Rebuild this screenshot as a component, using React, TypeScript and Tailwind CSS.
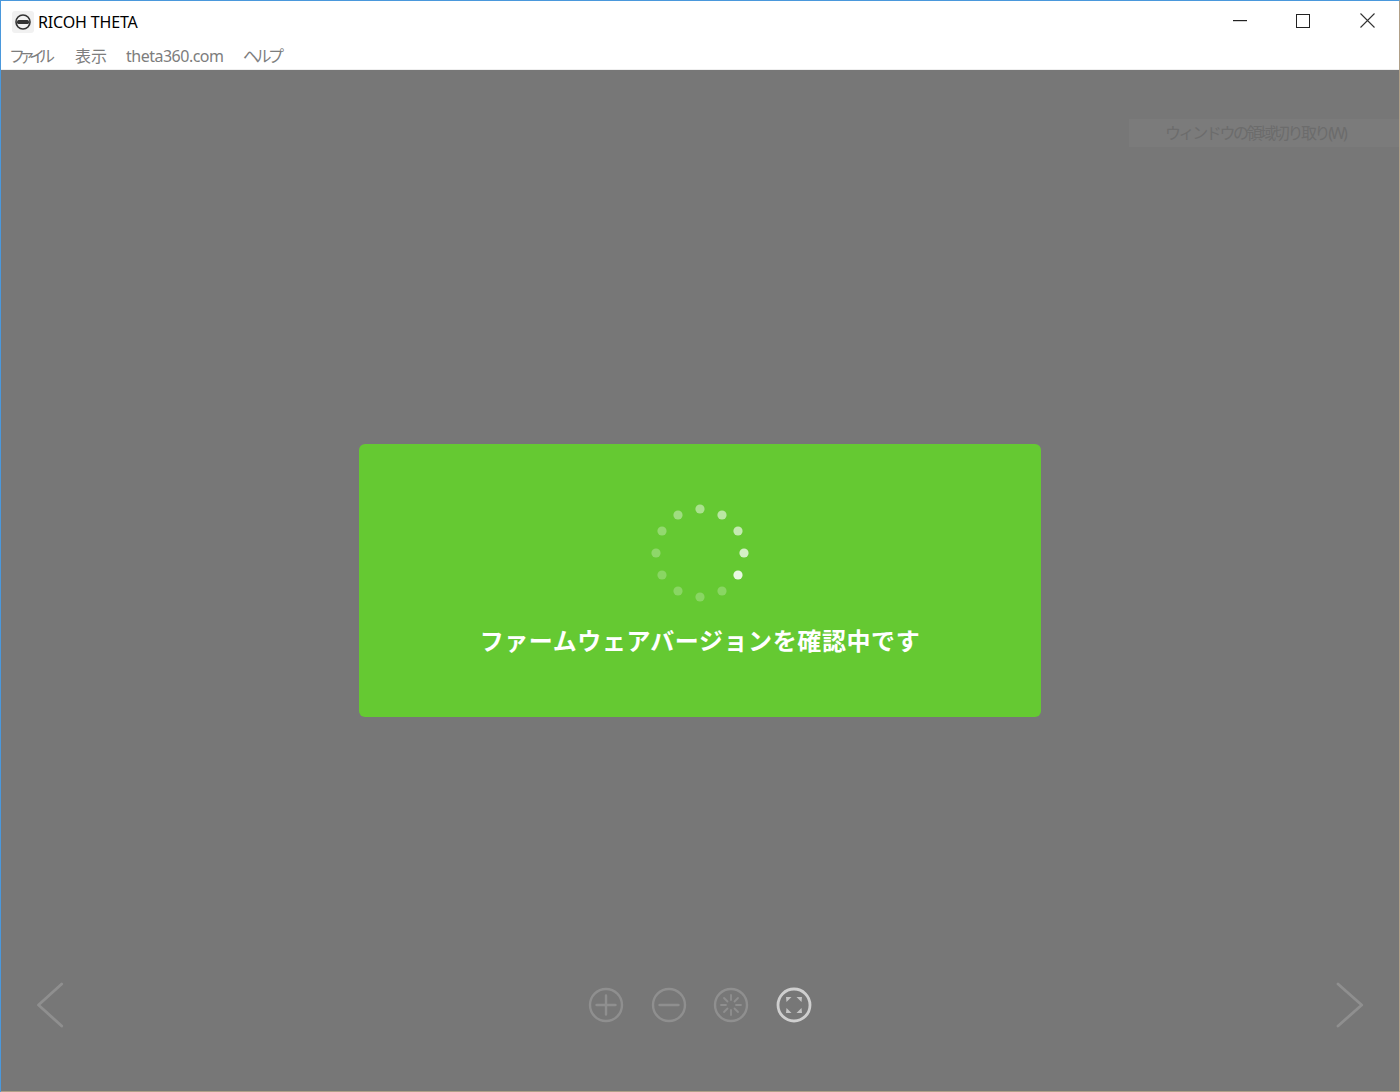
const JP = "font-['Noto_Sans','Noto_Sans_CJK_JP',sans-serif]"

const MENUS = [
  { label: 'ファイル', cls: 'w-[66px] tracking-[-6px]' },
  { label: '表示', cls: 'w-[51px] tracking-[0px]' },
  { label: 'theta360.com', cls: 'w-[117px] tracking-[-0.5px]' },
  { label: 'ヘルプ', cls: 'w-[50px] tracking-[-3.5px]' },
]

const DOTS = [
  [700, 509, 0.45], [722, 515, 0.55], [738, 531, 0.62], [744, 553, 0.72], [738, 575, 0.86], [722, 591, 0.24],
  [700, 597, 0.24], [678, 591, 0.24], [662, 575, 0.24], [656, 553, 0.27], [662, 531, 0.3], [678, 515, 0.38],
]

function RoundIcon({ bright, children }: { bright?: boolean; children: React.ReactNode }) {
  return (
    <svg width="36" height="36" viewBox="0 0 36 36" fill="none" stroke={bright ? '#cfcfcf' : '#8f8f8f'} strokeWidth="2.4" strokeLinecap="round" className="blur-[0.4px]">
      <circle cx="18" cy="18" r="16" strokeWidth={bright ? 2.8 : 2.4} />
      {children}
    </svg>
  )
}

export default function App() {
  return (
    <div className={`w-[1400px] h-[1092px] flex flex-col overflow-hidden border-t border-l border-r border-t-[#4a98dc] border-l-[#4a98dc] border-r-[#b0a088] ${JP}`}>
      <div className="h-[68px] bg-white flex flex-col shrink-0">
        <div className="flex items-center h-[41px]">
          <div className="ml-[11px] w-[22px] h-[22px] rounded-[3px] bg-[#f1f1f1] flex items-center justify-center">
            <svg width="18" height="18" viewBox="0 0 18 18">
              <circle cx="9" cy="9" r="7" fill="none" stroke="#333" strokeWidth="1.6" />
              <rect x="3" y="7" width="12" height="4" rx="1.5" fill="#333" />
            </svg>
          </div>
          <span className="ml-[4px] text-[16px] tracking-[-0.15px] text-black">RICOH THETA</span>
          <div className="ml-auto flex items-center mb-[2px]">
            <svg width="14" height="2" className="mr-[49px]"><rect width="14" height="1.2" fill="#222" /></svg>
            <div className="w-[14px] h-[14px] border-[1.4px] border-[#222] mr-[50px]" />
            <svg width="15" height="15" viewBox="0 0 15 15" className="mr-[24px]">
              <path d="M0.5 0.5 14.5 14.5M14.5 0.5 0.5 14.5" stroke="#333" strokeWidth="1.1" />
            </svg>
          </div>
        </div>
        <div className="flex items-center h-[27px] pl-[8px] text-[16px] text-[#7d7d7d]">
          {MENUS.map(m => <span key={m.label} className={m.cls}>{m.label}</span>)}
        </div>
      </div>
      <div className="h-[1px] bg-[#eeeeee] shrink-0" />

      <main className="relative flex-1 bg-[#777777] flex items-center justify-center">
        <div className="absolute right-0 top-[49px] w-[270px] h-[28px] bg-[#7b7b7b] flex items-center pl-[36px] text-[16px] tracking-[-2.4px] text-[#6c6c6c]">
          ウィンドウの領域切り取り(W)
        </div>

        <div className="w-[682px] h-[273px] rounded-[6px] bg-[#65c932] flex flex-col items-center">
          <svg width="100" height="100" viewBox="650 503 100 100" className="mt-[59px] blur-[0.3px]">
            {DOTS.map(([x, y, o]) => <circle key={`${x}-${y}`} cx={x} cy={y} r="4.6" fill="#ffffff" fillOpacity={o} />)}
          </svg>
          <p className="mt-[21px] text-[24px] leading-[34px] font-bold tracking-[0.6px] text-white whitespace-nowrap">ファームウェアバージョンを確認中です</p>
        </div>

        <svg width="30" height="50" viewBox="0 0 30 50" fill="none" stroke="#8f8f8f" strokeWidth="2.8" strokeLinecap="round" strokeLinejoin="round" className="absolute left-[35px] top-[910px] blur-[0.4px]">
          <path d="M25.7 4 2.5 25 25.7 46" />
        </svg>
        <svg width="30" height="50" viewBox="0 0 30 50" fill="none" stroke="#8f8f8f" strokeWidth="2.8" strokeLinecap="round" strokeLinejoin="round" className="absolute right-[34px] top-[910px] blur-[0.4px]">
          <path d="M3 4 26.7 25 3 46" />
        </svg>

        <div className="absolute left-[587px] top-[917px] flex gap-[26.7px]">
          <RoundIcon><path d="M18 8.5V27.5M8.5 18H27.5" /></RoundIcon>
          <RoundIcon><path d="M8.5 18H27.5" /></RoundIcon>
          <RoundIcon>
            <path d="M18 8V13M18 23V28M8 18H13M23 18H28M11 11 14.5 14.5M21.5 21.5 25 25M25 11 21.5 14.5M14.5 21.5 11 25" strokeWidth="1.8" />
          </RoundIcon>
          <RoundIcon bright>
            <g fill="#c4c4c4" stroke="none">
              <path d="M10 10H15.5L10.5 15Z" />
              <path d="M26 10H20.5L25.5 15Z" />
              <path d="M10 26H15.5L10.5 21Z" />
              <path d="M26 26H20.5L25.5 21Z" />
            </g>
          </RoundIcon>
        </div>
      </main>
      <div className="h-[1px] bg-[#b0a088] shrink-0" />
    </div>
  )
}
